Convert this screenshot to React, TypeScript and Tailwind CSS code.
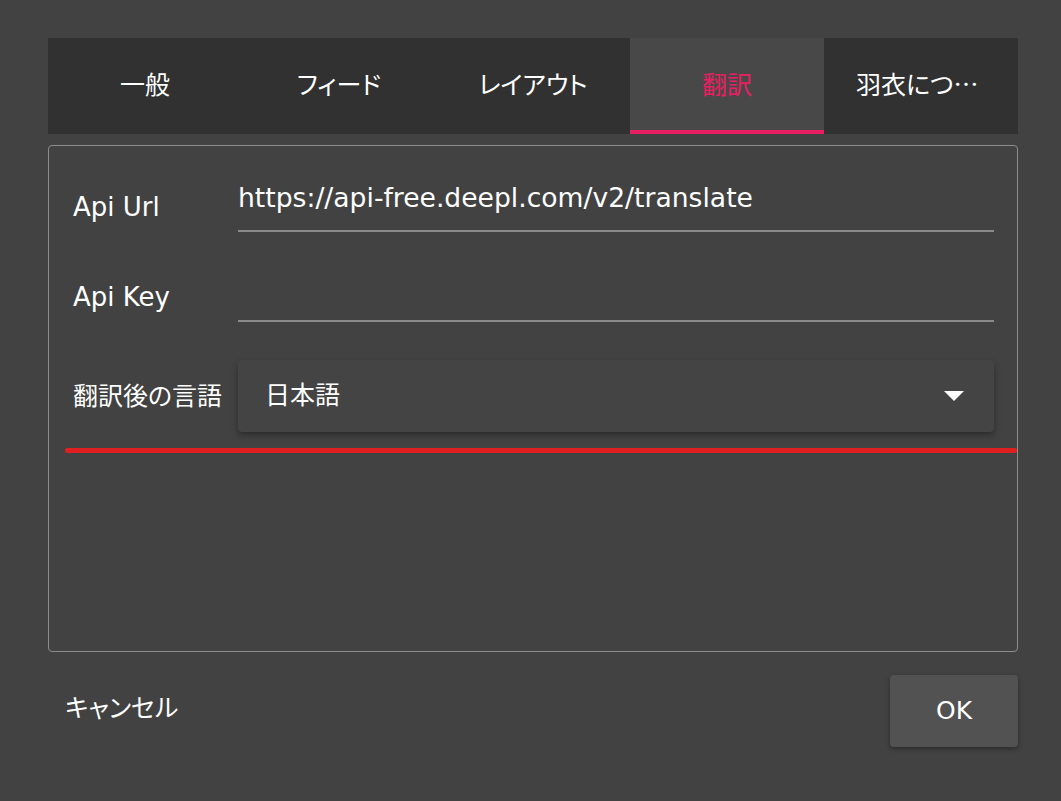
import React from 'react';

const tabs = ['一般', 'フィード', 'レイアウト', '翻訳', '羽衣について'];

const font = '"DejaVu Sans", "Noto Sans CJK JP", sans-serif';

export default function App() {
  const active = 3;
  return (
    <div
      className="w-[1061px] h-[801px] bg-[#424242] text-white pt-[38px] pl-[48px] pr-[43px] overflow-hidden [font-feature-settings:'palt']"
      style={{ fontFamily: font }}
    >
      {/* tab bar */}
      <div className="flex h-[96px] bg-[#313131]">
        {tabs.map((t, i) => (
          <div
            key={t}
            className={`flex-1 min-w-0 flex items-center justify-center px-[32px] pb-[4px] relative ${
              i === active ? 'bg-[#484848] text-[#e91e63]' : 'text-white'
            }`}
          >
            <span className="text-[25px] truncate" style={{ fontFamily: '"Noto Sans CJK JP", sans-serif' }}>
              {t}
            </span>
            {i === active && <div className="absolute left-0 right-0 bottom-0 h-[4px] bg-[#e91e63]" />}
          </div>
        ))}
      </div>

      {/* panel */}
      <div className="mt-[11px] h-[507px] border border-[#8c8c8c] rounded-[4px] pt-[28px]">
        <div className="flex items-end pl-[24px] pr-[23px]">
          <div className="w-[165px] shrink-0 pb-[10px] text-[26px] leading-[30px]">Api Url</div>
          <div className="flex-1 pt-[8px] pb-[16px] border-b-2 border-[#8a8a8a] text-[26.6px] leading-[32px]">
            https://api-free.deepl.com/v2/translate
          </div>
        </div>
        <div className="flex items-end pl-[24px] pr-[23px] mt-[30px]">
          <div className="w-[165px] shrink-0 pb-[10px] text-[26px] leading-[30px]">Api Key</div>
          <div className="flex-1 h-[60px] border-b-2 border-[#8a8a8a]" />
        </div>
        <div className="flex items-center pl-[24px] pr-[23px] mt-[38px]">
          <div className="w-[165px] shrink-0 pt-[2px] text-[25px] leading-[30px] whitespace-nowrap">翻訳後の言語</div>
          <div className="flex-1 h-[72px] flex items-center justify-between pl-[27px] pr-[30px] bg-[#444444] rounded-[4px] shadow-[0_3px_6px_rgba(0,0,0,0.35)]">
            <span className="text-[25px]">日本語</span>
            <svg width="20" height="10" viewBox="0 0 20 10">
              <path d="M0 0 L20 0 L10 10 Z" fill="#ffffff" />
            </svg>
          </div>
        </div>
        <div className="ml-[16px] mt-[16px] h-[5px] rounded-full bg-[#e02020]" />
      </div>

      {/* footer */}
      <div className="flex items-center justify-between mt-[23px]">
        <div className="ml-[17px] text-[25px] pb-[4px]">キャンセル</div>
        <button className="w-[128px] h-[72px] bg-[#525252] rounded-[4px] shadow-[0_2px_5px_rgba(0,0,0,0.35)] text-[25px] text-white">
          OK
        </button>
      </div>
    </div>
  );
}
